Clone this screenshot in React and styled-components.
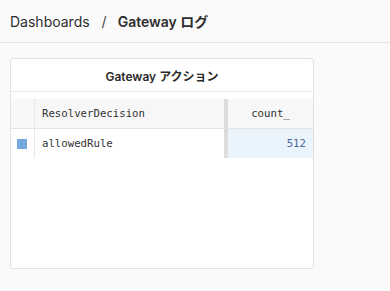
import React from 'react';
import styled, { createGlobalStyle } from 'styled-components';

const GlobalStyle = createGlobalStyle`
  html, body {
    margin: 0;
    padding: 0;
    background: #fafafa;
    font-family: Inter, "Noto Sans CJK JP", sans-serif;
    color: #2b2b2b;
  }
`;

const Page = styled.div`
  width: 390px;
  height: 291px;
  background: #fafafa;
  overflow: hidden;
`;

const Header = styled.header`
  height: 42px;
  display: flex;
  align-items: center;
  padding: 0 10px;
  border-bottom: 1px solid #e3e3e3;
  font-size: 14px;
  color: #2e2e2e;
`;

const Crumb = styled.span`
  font-weight: ${p => (p.current ? 600 : 400)};
`;

const Slash = styled.span`
  margin: 0 11px 0 12px;
  color: #444;
`;

const Card = styled.section`
  margin: 15px 0 0 10px;
  width: 304px;
  height: 211px;
  box-sizing: border-box;
  background: #fff;
  border: 1px solid #e2e2e2;
  border-radius: 3px;
`;

const CardTitle = styled.h3`
  margin: 0;
  height: 32px;
  display: flex;
  align-items: center;
  justify-content: center;
  border-bottom: 1px solid #e6e6e6;
  font-size: 12px;
  font-weight: 600;
  color: #2a2a2a;
`;

const Table = styled.div`
  margin-top: 7px;
  display: grid;
  grid-template-columns: 24px 189px 1fr;
  grid-template-rows: 30px 29px;
  font-family: "DejaVu Sans Mono", "Liberation Mono", monospace;
  font-size: 10.7px;
  color: #333;
`;

const Cell = styled.div`
  display: flex;
  align-items: center;
  box-sizing: border-box;
  padding: 0 7px;
  background: ${p => (p.head ? '#f7f7f7' : p.value ? '#eaf4fd' : '#fff')};
  border-bottom: ${p => (p.head ? '1px solid #e4e4e4' : 'none')};
  border-right: ${p => (p.marker ? '1px solid #e8e8e8' : 'none')};
  border-left: ${p => (p.count ? '4px solid #dcdcdc' : 'none')};
  justify-content: ${p => p.align || 'flex-start'};
  color: ${p => (p.value ? '#4f6893' : '#333')};
`;

const Swatch = styled.span`
  width: 10px;
  height: 10px;
  margin-left: -1px;
  background: #74a9dc;
`;

export default function App() {
  return (
    <Page>
      <GlobalStyle />
      <Header>
        <Crumb>Dashboards</Crumb>
        <Slash>/</Slash>
        <Crumb current>Gateway ログ</Crumb>
      </Header>
      <Card>
        <CardTitle>Gateway アクション</CardTitle>
        <Table>
          <Cell head marker />
          <Cell head>ResolverDecision</Cell>
          <Cell head count align="center">count_</Cell>
          <Cell marker>
            <Swatch />
          </Cell>
          <Cell>allowedRule</Cell>
          <Cell count value align="flex-end">512</Cell>
        </Table>
      </Card>
    </Page>
  );
}
